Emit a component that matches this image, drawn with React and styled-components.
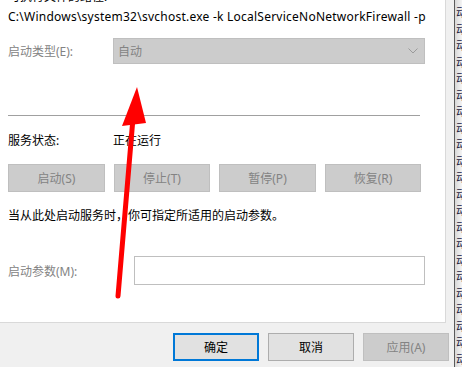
import React from 'react';
import styled, { createGlobalStyle } from 'styled-components';

const GlobalStyle = createGlobalStyle`
    html, body {
        margin: 0;
        padding: 0;
        background: #f0f0f0;
        overflow: hidden;
    }
    * { box-sizing: border-box; }
`;

const font = `"Noto Sans", "Noto Sans CJK SC", sans-serif`;

const Screen = styled.div`
    position: relative;
    width: 462px;
    height: 367px;
    display: flex;
    font-family: ${font};
    font-size: 12px;
    color: #000;
    overflow: hidden;
`;

const Dialog = styled.div`
    width: 454px;
    display: flex;
    flex-direction: column;
`;

const Panel = styled.div`
    width: 446px;
    height: 323px;
    background: #fff;
    border-right: 1px solid #d9d9d9;
    border-bottom: 1px solid #d9d9d9;
    padding-left: 8px;
    display: flex;
    flex-direction: column;
`;

const Line = styled.div`
    height: 17px;
    line-height: 17px;
    white-space: nowrap;
    overflow: hidden;
    margin-top: ${p => p.$top || 0}px;
    letter-spacing: ${p => p.$spacing || 0}px;
    color: ${p => (p.$muted ? '#838383' : '#000')};
`;

const Row = styled.div`
    display: flex;
    align-items: center;
    margin-top: ${p => p.$top || 0}px;
`;

const Label = styled.div`
    width: ${p => p.$width || 105}px;
    color: ${p => (p.$muted ? '#838383' : '#000')};
    white-space: nowrap;
`;

const Select = styled.div`
    width: 312px;
    height: 26px;
    background: #cccccc;
    border: 1px solid #bfbfbf;
    display: flex;
    align-items: center;
    justify-content: space-between;
    padding: 0 6px 0 4px;
    color: #838383;
`;

const Separator = styled.div`
    width: 412px;
    height: 1px;
    background: #a0a0a0;
    margin-top: ${p => p.$top}px;
`;

const ButtonRow = styled.div`
    display: flex;
    gap: ${p => p.$gap || 9}px;
    margin-top: ${p => p.$top || 0}px;
`;

const Button = styled.div`
    width: ${p => p.$width || 96}px;
    height: 28px;
    display: flex;
    align-items: center;
    justify-content: center;
    background: ${p => (p.$disabled ? '#cccccc' : '#e1e1e1')};
    border: ${p => (p.$default ? '2px solid #0078d7' : p.$disabled ? '1px solid #bfbfbf' : '1px solid #adadad')};
    color: ${p => (p.$disabled ? '#838383' : '#000')};
`;

const Input = styled.div`
    width: 291px;
    height: 29px;
    background: #fff;
    border: 1px solid #bfbfbf;
`;

const Footer = styled.div`
    flex: 1;
    display: flex;
    justify-content: flex-end;
    padding-top: 10px;
    padding-right: 5px;
    gap: 9px;
`;

const Edge = styled.div`
    width: 1px;
    background: #5a5a5a;
`;

const Behind = styled.div`
    flex: 1;
    background: linear-gradient(to right, #d8d8d8, #f4f4f4);
    display: flex;
    flex-direction: column;
    padding-top: 5px;
    padding-left: 1px;
    overflow: hidden;
`;

const BehindGlyph = styled.div`
    height: 16.5px;
    line-height: 16.5px;
    color: #1a1a40;
    white-space: nowrap;
`;

const Arrow = styled.svg`
    position: absolute;
    left: 0;
    top: 0;
    pointer-events: none;
`;

const Chevron = () => (
    <svg width="10" height="6" viewBox="0 0 10 6">
        <path d="M0.5 0.5 L5 5 L9.5 0.5" fill="none" stroke="#9a9a9a" strokeWidth="1" />
    </svg>
);

const actions = [
    { title: '启动(S)', width: 97 },
    { title: '停止(T)', width: 96 },
    { title: '暂停(P)', width: 97 },
    { title: '恢复(R)', width: 96 },
];

export default function App() {
    return (
        <Screen>
            <GlobalStyle />
            <Dialog>
                <Panel>
                    <Line $top={-12}>可执行文件的路径:</Line>
                    <Line $top={3} $spacing={0.24}>C:\Windows\system32\svchost.exe -k LocalServiceNoNetworkFirewall -p</Line>
                    <Row $top={13}>
                        <Label $muted>启动类型(E):</Label>
                        <Select>
                            <span>自动</span>
                            <Chevron />
                        </Select>
                    </Row>
                    <Separator $top={51} />
                    <Row $top={15}>
                        <Label>服务状态:</Label>
                        <span>正在运行</span>
                    </Row>
                    <ButtonRow $top={15} $gap={9}>
                        {actions.map((a, i) => (
                            <Button key={i} $disabled $width={a.width}>{a.title}</Button>
                        ))}
                    </ButtonRow>
                    <Line $top={15}>当从此处启动服务时，你可指定所适用的启动参数。</Line>
                    <Row $top={32}>
                        <Label $muted $width={126}>启动参数(M):</Label>
                        <Input />
                    </Row>
                </Panel>
                <Footer>
                    <Button $default $width={86}>确定</Button>
                    <Button $width={86}>取消</Button>
                    <Button $disabled $width={86}>应用(A)</Button>
                </Footer>
            </Dialog>
            <Edge />
            <Behind>
                {Array.from({ length: 22 }).map((_, i) => (
                    <BehindGlyph key={i}>动</BehindGlyph>
                ))}
            </Behind>
            <Arrow width="462" height="367" viewBox="0 0 462 367">
                <path d="M118 296 L133 118" stroke="#ff0000" strokeWidth="5" strokeLinecap="round" fill="none" />
                <path d="M122 126 L137 87 L146 123 Z" fill="#ff0000" />
            </Arrow>
        </Screen>
    );
}
